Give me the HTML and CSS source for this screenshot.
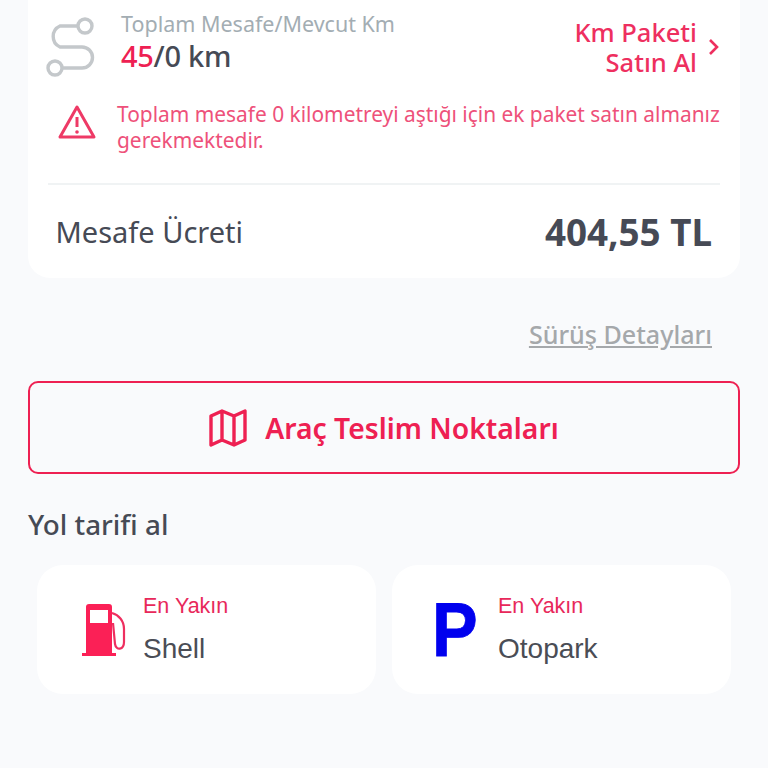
FILE: index.html
```html
<!DOCTYPE html>
<html lang="tr">
<head>
<meta charset="utf-8">
<title>Sürüş Özeti</title>
<link rel="stylesheet" href="styles.css">
</head>
<body>
<main class="page">
  <section class="card">
    <div class="km-row">
      <svg class="route-icon" width="52" height="60" viewBox="0 0 52 60" fill="none">
        <circle cx="40" cy="9" r="7" stroke="#c4c8cb" stroke-width="3.4"/>
        <circle cx="10" cy="51" r="7" stroke="#c4c8cb" stroke-width="3.4"/>
        <path d="M33 9H15a11.500 11.500 0 0 0 0 21H37a10.500 10.500 0 0 1 0 21H17" stroke="#c4c8cb" stroke-width="3.4"/>
      </svg>
      <div class="km-info">
        <div class="km-label">Toplam Mesafe/Mevcut Km</div>
        <div class="km-value"><span class="accent">45</span>/0 km</div>
      </div>
      <a class="km-buy">
        <span class="km-buy-text">Km Paketi<br>Satın Al</span>
        <svg width="12" height="18" viewBox="0 0 12 18" fill="none"><path d="M2 2l7 7-7 7" stroke="#ee2f5f" stroke-width="2.600"/></svg>
      </a>
    </div>
    <div class="warning">
      <svg class="warn-icon" width="40" height="36" viewBox="0 0 40 36" fill="none">
        <path d="M20 3L37 33H3Z" stroke="#ee3a66" stroke-width="3" stroke-linejoin="round"/>
        <path d="M20 13v10" stroke="#ee3a66" stroke-width="3"/>
        <circle cx="20" cy="28" r="1.800" fill="#ee3a66"/>
      </svg>
      <p class="warn-text">Toplam mesafe 0 kilometreyi aştığı için ek paket satın almanız gerekmektedir.</p>
    </div>
    <div class="fee-row">
      <span class="fee-label">Mesafe Ücreti</span>
      <span class="fee-value">404,55 TL</span>
    </div>
  </section>

  <div class="details-row"><a class="details-link">Sürüş Detayları</a></div>

  <button class="points-btn">
    <svg width="38" height="38" viewBox="0 0 38 38" fill="none">
      <path d="M2 7L13 2L25 7L36 2V31L25 36L13 31L2 36Z M13 2V31 M25 7V36" stroke="#ee2052" stroke-width="3.400" stroke-linejoin="round"/>
    </svg>
    <span>Araç Teslim Noktaları</span>
  </button>

  <h2 class="section-title">Yol tarifi al</h2>

  <div class="tiles">
    <div class="tile tile-fuel">
      <svg width="44" height="54" viewBox="0 0 44 54" fill="none">
        <path d="M4 4a3 3 0 0 1 3-3H27a3 3 0 0 1 3 3V51H4Z M8 7V20H26V7Z" fill="#fb2056" fill-rule="evenodd"/>
        <rect x="0" y="50" width="34" height="3" fill="#fb2056"/>
        <path d="M30 10C37 12 42 18 42 26V39C42 47 34 48 33 41L31 20" stroke="#ee2f5f" stroke-width="2.200"/>
      </svg>
      <div class="tile-text"><div class="tile-sub">En Yakın</div><div class="tile-name">Shell</div></div>
    </div>
    <div class="tile tile-park">
      <span class="park-p">P</span>
      <div class="tile-text"><div class="tile-sub">En Yakın</div><div class="tile-name">Otopark</div></div>
    </div>
  </div>
</main>
</body>
</html>
```
FILE: styles.css
```css
* { box-sizing: border-box; }
html, body { margin: 0; height: 768px; overflow: hidden; }
body { background: #f9fafc; font-family: "Noto Sans", "Open Sans", sans-serif; color: #464a55; }
.page { padding: 0 28px; width: 768px; }
.card { background: #fff; border-radius: 0 0 22px 22px; height: 278px; padding: 12px 20px 0; width: 712px; }
.km-row { display: flex; align-items: flex-start; height: 79px; }
.route-icon { margin: 5px 0 0 -3px; flex: none; }
.km-info { margin-left: 24px; flex: 1; }
.km-label { font-size: 21.500px; line-height: 26px; margin-top: -1px; color: #a3adb3; }
.km-value { font-size: 29px; line-height: 38px; font-weight: 500; letter-spacing: -0.300px; }
.accent { color: #ee2052; }
.km-buy { display: flex; align-items: center; gap: 11px; margin-top: 5px; color: #ee2f5f; font-size: 25.500px; line-height: 30px; font-weight: 500; text-align: right; }
.warning { display: flex; align-items: flex-start; margin-top: 10px; padding-left: 9px; height: 84px; border-bottom: 2px solid #f0f3f4; }
.warn-icon { margin-top: 3px; flex: none; }
.warn-text { margin: 0 -3px 0 20px; font-size: 20.900px; line-height: 26px; color: #ee517a; }
.fee-row { display: flex; justify-content: space-between; align-items: center; height: 93px; padding: 0 8px 0 7.500px; }
.fee-label { font-size: 29px; }
.fee-value { font-size: 36.800px; font-weight: 700; }
.details-row { display: flex; justify-content: flex-end; margin-top: 40px; height: 32px; padding-right: 28px; }
.details-link { font-size: 25.100px; font-weight: 500; line-height: 32px; color: #a5a8ab; text-decoration: underline; }
.points-btn { display: flex; align-items: center; justify-content: center; gap: 18px; width: 712px; height: 93px; margin-top: 31px; background: transparent; border: 2px solid #ee2052; border-radius: 10px; font: 600 28.300px "Noto Sans", sans-serif; color: #ee2052; }
.section-title { margin: 32px 0 0; font-size: 27.800px; line-height: 36px; font-weight: 500; }
.tiles { display: flex; gap: 16px; margin-top: 23px; padding-left: 9px; }
.tile { display: flex; align-items: center; width: 339px; height: 129px; background: #fff; border-radius: 26px; }
.tile-fuel { padding-left: 45px; gap: 17px; }
.tile-park { padding-left: 40px; gap: 20px; }
.tile-text { font-family: "Liberation Sans", sans-serif; margin-top: -2px; }
.tile-sub { font-size: 21.500px; line-height: 28px; color: #e8285a; }
.tile-name { font-size: 28px; line-height: 32px; margin-top: 13px; color: #4a4d55; }
.park-p { font: 700 76px/76px "Liberation Sans", sans-serif; color: #0000ee; width: 46px; -webkit-text-stroke: 0.800px #0000ee; transform: scaleX(0.9); transform-origin: left center; }
```
